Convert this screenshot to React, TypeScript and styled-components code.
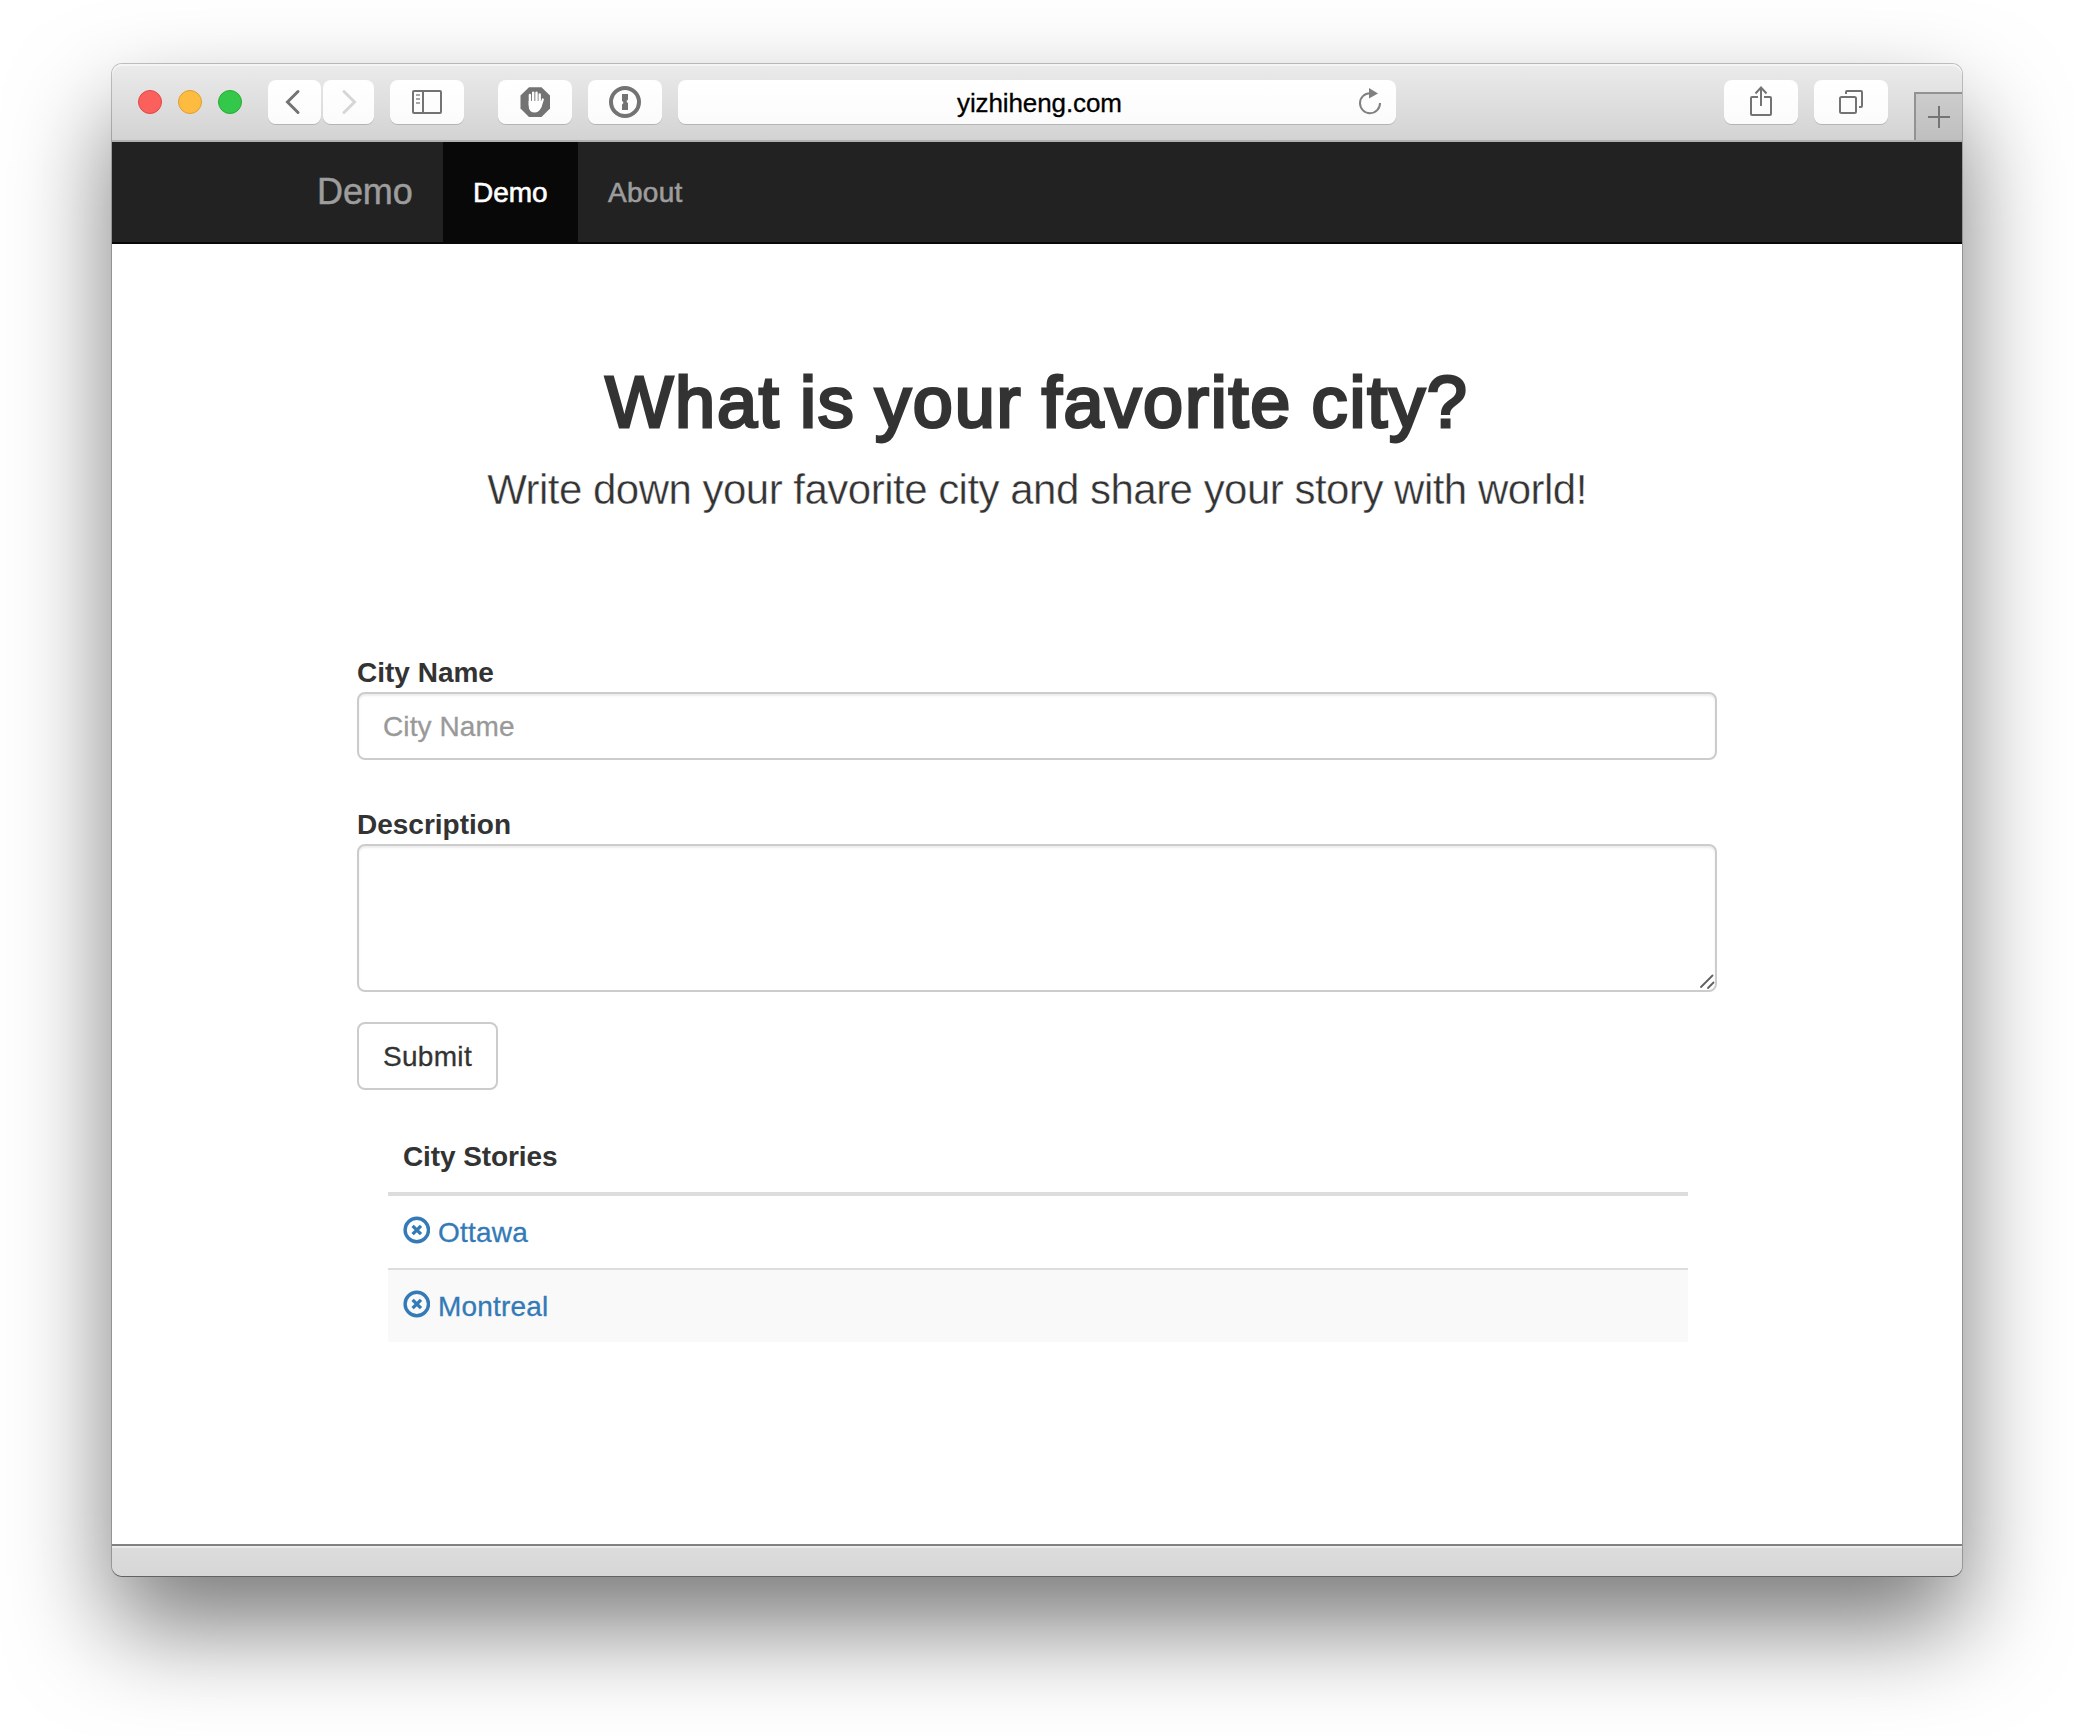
import React from "react";
import styled, { createGlobalStyle } from "styled-components";

const Global = createGlobalStyle`
  * { box-sizing: border-box; }
  body {
    margin: 0;
    background: #fff;
    color: #333;
    font-family: "Liberation Sans", Arial, sans-serif;
    font-size: 28px;
    line-height: 40px;
  }
`;

const Desktop = styled.div`
  width: 2074px;
  height: 1736px;
  padding: 64px 112px 160px;
  overflow: hidden;
`;

const Window = styled.div`
  display: flex;
  flex-direction: column;
  width: 1850px;
  height: 1512px;
  border-radius: 10px;
  background: #fff;
  box-shadow: 0 0 0 1px rgba(0, 0, 0, 0.22), 0 50px 100px rgba(0, 0, 0, 0.53);
`;

const Toolbar = styled.header`
  display: flex;
  align-items: flex-start;
  height: 78px;
  padding: 16px 0 0 26px;
  border-bottom: 2px solid #b1b1b1;
  border-radius: 10px 10px 0 0;
  background: linear-gradient(#ebebeb, #d3d3d3);
  box-shadow: inset 0 2px 0 #f4f4f4;
`;

const Lights = styled.div`
  display: flex;
  gap: 16px;
  padding-top: 10px;
  margin-right: 14px;
`;

const Light = styled.span<{ $fill: string; $edge: string }>`
  width: 24px;
  height: 24px;
  border-radius: 50%;
  border: 1px solid ${(p) => p.$edge};
  background: ${(p) => p.$fill};
`;

const ToolButton = styled.button<{ $w?: number; $gap?: number }>`
  display: flex;
  flex: none;
  align-items: center;
  justify-content: center;
  width: ${(p) => p.$w ?? 74}px;
  height: 44px;
  margin: 0 0 0 ${(p) => p.$gap ?? 16}px;
  padding: 0;
  border: 0;
  border-radius: 8px;
  background: linear-gradient(#fff, #fbfbfb);
  box-shadow: 0 1px 0 #b4b4b4;
`;

const AddressBar = styled.div`
  display: flex;
  align-items: center;
  width: 718px;
  height: 44px;
  margin: 0 312px 0 16px;
  padding: 2px 14px 0 279px;
  border-radius: 8px;
  background: linear-gradient(#fff, #fbfbfb);
  box-shadow: 0 1px 0 #b4b4b4;
  color: #000;
  font-size: 26px;
  letter-spacing: -0.1px;
  -webkit-text-stroke: 0.3px #000;
`;

const ReloadIcon = styled.svg`
  margin: -4px 0 0 auto;
`;

const NewTab = styled.button`
  display: flex;
  flex: none;
  align-items: center;
  justify-content: center;
  width: 48px;
  height: 48px;
  margin: 12px 0 0 26px;
  padding: 0;
  border: 0 solid #929292;
  border-width: 2px 0 0 2px;
  background: linear-gradient(#cccccc, #bfbfbf);
`;

const Navbar = styled.nav`
  display: flex;
  height: 102px;
  padding-left: 175px;
  border-bottom: 2px solid #080808;
  background: #222;
`;

const Brand = styled.a`
  width: 156px;
  padding: 30px;
  color: #9d9d9d;
  font-size: 36px;
  letter-spacing: -0.1px;
  -webkit-text-stroke: 0.5px #9d9d9d;
`;

const NavItem = styled.a<{ $active?: boolean }>`
  width: 135px;
  padding: 31px 29px 29px 30px;
  background: ${(p) => (p.$active ? "#080808" : "transparent")};
  color: ${(p) => (p.$active ? "#fff" : "#9d9d9d")};
  letter-spacing: ${(p) => (p.$active ? 0 : 0.3)}px;
  -webkit-text-stroke: 0.6px ${(p) => (p.$active ? "#fff" : "#9d9d9d")};
`;

const Page = styled.main`
  flex: 1;
  padding: 119px 245px 0;
`;

const Title = styled.h1`
  margin: 0 0 18px;
  font-size: 72px;
  font-weight: 400;
  line-height: 79px;
  letter-spacing: 1.8px;
  word-spacing: -2.4px;
  text-align: center;
  white-space: nowrap;
  -webkit-text-stroke: 3px #333;
`;

const Lead = styled.p`
  margin: 0 0 133px;
  font-size: 42px;
  line-height: 59px;
  letter-spacing: -0.51px;
  text-align: center;
  white-space: nowrap;
  -webkit-text-stroke: 0.4px #fff;
`;

const Label = styled.label`
  display: block;
  height: 40px;
  padding-top: 1px;
  font-weight: 700;
`;

const TextInput = styled.input`
  display: block;
  width: 1360px;
  height: 68px;
  margin-bottom: 44px;
  padding: 1px 24px 0;
  border: 2px solid #ccc;
  border-radius: 8px;
  box-shadow: inset 0 2px 2px rgba(0, 0, 0, 0.075);
  font: inherit;
  letter-spacing: 0.1px;
  &::placeholder {
    color: #999;
    opacity: 1;
    -webkit-text-stroke: 0.3px #999;
  }
`;

const AreaFrame = styled.div`
  display: flex;
  align-items: flex-end;
  justify-content: flex-end;
  width: 1360px;
  height: 148px;
  margin-bottom: 30px;
  border: 2px solid #ccc;
  border-radius: 8px;
  box-shadow: inset 0 2px 2px rgba(0, 0, 0, 0.075);
`;

const Area = styled.textarea`
  flex: 1;
  align-self: stretch;
  border: 0;
  background: transparent;
  resize: none;
  outline: 0;
`;

const Submit = styled.button`
  display: block;
  width: 141px;
  height: 68px;
  padding: 1px 0 0;
  border: 2px solid #ccc;
  border-radius: 8px;
  background: #fff;
  color: #333;
  font: inherit;
  letter-spacing: 0.3px;
  -webkit-text-stroke: 0.3px #333;
`;

const Stories = styled.section`
  width: 1300px;
  margin: 30px 0 0 31px;
`;

const StoriesHead = styled.div`
  padding: 17px 15px 15px;
  border-bottom: 4px solid #ddd;
  font-weight: 700;
  letter-spacing: -0.1px;
`;

const Story = styled.a<{ $striped?: boolean }>`
  display: flex;
  gap: 8px;
  padding: 16px 15px;
  border-top: ${(p) => (p.$striped ? "2px solid #ddd" : "0")};
  background: ${(p) => (p.$striped ? "#f9f9f9" : "#fff")};
  color: #337ab7;
`;

const StoryName = styled.span`
  height: 40px;
  padding-top: 1px;
  letter-spacing: 0.2px;
  -webkit-text-stroke: 0.3px #337ab7;
`;

const StatusBar = styled.footer`
  height: 32px;
  border-top: 2px solid #828282;
  border-radius: 0 0 10px 10px;
  background: linear-gradient(#dcdcdc, #d7d7d7);
  box-shadow: inset 0 2px 0 #ebebeb, 0 1px 0 #626262;
`;

const RemoveIcon = () => (
  <svg width="27" height="40" viewBox="0 0 27 40" fill="none" stroke="#337ab7">
    <circle cx="13.8" cy="18" r="11.7" strokeWidth="3.4" />
    <path d="M9.6 13.8 18 22.2M18 13.8 9.6 22.2" strokeWidth="3.3" />
  </svg>
);

const stories = ["Ottawa", "Montreal"];

export default function App() {
  return (
    <Desktop>
      <Global />
      <Window>
        <Toolbar>
          <Lights>
            <Light $fill="#fc605c" $edge="#df4744" />
            <Light $fill="#fdbc40" $edge="#de9f34" />
            <Light $fill="#34c84a" $edge="#27aa35" />
          </Lights>
          <ToolButton $w={53} $gap={12}>
            <svg width="53" height="44" fill="none" stroke="#737373" strokeWidth="3" strokeLinecap="round">
              <path d="M30 11.5 19.5 22 30 32.5" />
            </svg>
          </ToolButton>
          <ToolButton $w={51} $gap={2}>
            <svg width="51" height="44" fill="none" stroke="#d6d6d6" strokeWidth="3" strokeLinecap="round">
              <path d="M21 11.5 31.5 22 21 32.5" />
            </svg>
          </ToolButton>
          <ToolButton>
            <svg width="74" height="44" fill="none" stroke="#737373" strokeWidth="2">
              <rect x="23" y="11" width="28" height="22" rx="1" />
              <path d="M33 11V33" />
              <path d="M26 15H30M26 19H30M26 23H30" strokeWidth="1.6" stroke="#8c8c8c" />
            </svg>
          </ToolButton>
          <ToolButton $gap={34}>
            <svg width="74" height="44">
              <path d="M31 7.2H43.5L52 15.5V28.5L43.5 37H31L22.5 28.5V15.5Z" fill="#737373" />
              <g stroke="#fff" strokeLinecap="round" fill="none">
                <path d="M31.9 15V25M35.2 12.6V24M38.5 12.6V24M41.7 14.5V25" strokeWidth="2.4" />
                <path d="M44.8 19.5 42.4 27" strokeWidth="2.2" />
              </g>
              <path d="M30.7 21H42.8V26L44 24Q42.5 32.6 37 32.6Q30.7 32.6 30.7 26Z" fill="#fff" />
            </svg>
          </ToolButton>
          <ToolButton>
            <svg width="74" height="44">
              <circle cx="37" cy="22" r="14" fill="none" stroke="#737373" strokeWidth="4" />
              <path d="M34 14H40V19.5L38.6 21Q38.6 22.6 40 23V30H34V24.5L35.4 23Q35.4 21.4 34 21Z" fill="#737373" />
            </svg>
          </ToolButton>
          <AddressBar>
            yizhiheng.com
            <ReloadIcon width="24" height="30" fill="none" stroke="#808080" strokeWidth="2">
              <path d="M12 7.2A10 10 0 1 0 22 17" />
              <path d="M11 2 20 7.5 11 12.5Z" fill="#808080" stroke="none" />
            </ReloadIcon>
          </AddressBar>
          <ToolButton>
            <svg width="74" height="44" fill="none" stroke="#737373" strokeWidth="2">
              <path d="M34 17H28Q27 17 27 18V34Q27 35 28 35H46Q47 35 47 34V18Q47 17 46 17H40" />
              <path d="M37 26V7.5M31.5 13.5 37 7.5 42.5 13.5" />
            </svg>
          </ToolButton>
          <ToolButton>
            <svg width="74" height="44" fill="none" stroke="#737373" strokeWidth="2">
              <rect x="26" y="17" width="16" height="16" rx="1.5" />
              <path d="M32 14V12Q32 11 33 11H47Q48 11 48 12V26Q48 27 47 27H45" />
            </svg>
          </ToolButton>
          <NewTab>
            <svg width="22" height="22" stroke="#757575" strokeWidth="2">
              <path d="M11 0V22M0 11H22" />
            </svg>
          </NewTab>
        </Toolbar>
        <Navbar>
          <Brand>Demo</Brand>
          <NavItem $active>Demo</NavItem>
          <NavItem>About</NavItem>
        </Navbar>
        <Page>
          <Title>What is your favorite city?</Title>
          <Lead>Write down your favorite city and share your story with world!</Lead>
          <Label>City Name</Label>
          <TextInput placeholder="City Name" />
          <Label>Description</Label>
          <AreaFrame>
            <Area />
            <svg width="18" height="18" stroke="#606060" strokeWidth="1.8" strokeLinecap="round">
              <path d="M4 15 15.5 3.5M11 16 16.5 10.5" />
            </svg>
          </AreaFrame>
          <Submit>Submit</Submit>
          <Stories>
            <StoriesHead>City Stories</StoriesHead>
            {stories.map((name, i) => (
              <Story key={name} $striped={i % 2 === 1}>
                <RemoveIcon />
                <StoryName>{name}</StoryName>
              </Story>
            ))}
          </Stories>
        </Page>
        <StatusBar />
      </Window>
    </Desktop>
  );
}
